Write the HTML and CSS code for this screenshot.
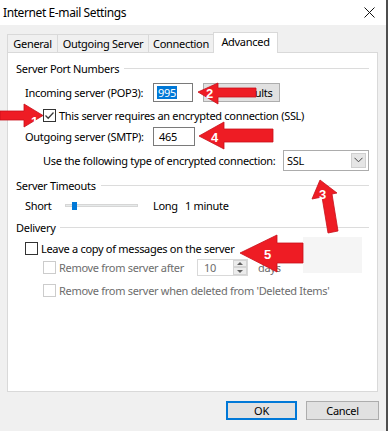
FILE: index.html
```html
<!DOCTYPE html>
<html lang="en">
<head>
    <meta charset="UTF-8">
    <title>Internet E-mail Settings</title>
    <link rel="stylesheet" href="styles.css">
</head>
<body>
    <div class="window">
        <!-- Title bar -->
        <div class="titlebar">
            <span class="title">Internet E-mail Settings</span>
            <svg class="close" width="11" height="11" viewBox="0 0 11 11">
                <path d="M0.5 0.5 L10.5 10.5 M10.5 0.5 L0.5 10.5" stroke="#111" stroke-width="1" fill="none"/>
            </svg>
        </div>

        <div class="dialog">
            <!-- Tabs -->
            <div class="tabs">
                <div class="tab tab-general">General</div>
                <div class="tab tab-outgoing">Outgoing Server</div>
                <div class="tab tab-connection">Connection</div>
                <div class="tab tab-advanced active">Advanced</div>
            </div>

            <!-- Advanced panel -->
            <div class="panel">
                <div class="group-title">Server Port Numbers</div>

                <div class="row row-incoming">
                    <span class="field-label">Incoming server (POP3):</span>
                    <div class="textbox tb-incoming"><span class="selected">995</span></div>
                    <div class="btn btn-defaults">Use Defaults</div>
                </div>

                <div class="row row-ssl indent">
                    <span class="checkbox checked">
                        <svg width="11" height="11" viewBox="0 0 11 11">
                            <path d="M1.5 5.5 L4.2 8.2 L9.5 2.5" stroke="#3c3c3c" stroke-width="1.3" fill="none"/>
                        </svg>
                    </span>
                    <span>This server requires an encrypted connection (SSL)</span>
                </div>

                <div class="row row-outgoing">
                    <span class="field-label">Outgoing server (SMTP):</span>
                    <div class="textbox tb-outgoing">465</div>
                </div>

                <div class="row row-encrypt indent">
                    <span class="encrypt-label">Use the following type of encrypted connection:</span>
                    <div class="select">
                        <span>SSL</span>
                        <span class="select-btn">
                            <svg width="9" height="6" viewBox="0 0 9 6">
                                <path d="M0.5 0.8 L4.5 4.8 L8.5 0.8" stroke="#444" stroke-width="1" fill="none"/>
                            </svg>
                        </span>
                    </div>
                </div>

                <div class="group-title gt-timeouts">Server Timeouts</div>

                <div class="row row-slider">
                    <span class="short-label">Short</span>
                    <div class="track"><span class="thumb"></span></div>
                    <span class="long-label">Long</span>
                    <span>1 minute</span>
                </div>

                <div class="group-title gt-delivery">Delivery</div>

                <div class="row row-leave">
                    <span class="checkbox"></span>
                    <span>Leave a copy of messages on the server</span>
                </div>

                <div class="row row-remove indent disabled">
                    <span class="checkbox"></span>
                    <span class="remove-label">Remove from server after</span>
                    <div class="spin">
                        <span class="spin-value">10</span>
                        <span class="spin-btns">
                            <span class="spin-up"></span>
                            <span class="spin-down"></span>
                        </span>
                    </div>
                    <span class="days">days</span>
                </div>

                <div class="row row-deleted indent disabled">
                    <span class="checkbox"></span>
                    <span>Remove from server when deleted from 'Deleted Items'</span>
                </div>
            </div>

            <!-- Buttons -->
            <div class="footer">
                <div class="btn btn-ok">OK</div>
                <div class="btn btn-cancel">Cancel</div>
            </div>
        </div>

        <!-- Annotation arrows drawn over the dialog -->
        <svg class="annotations" width="388" height="431" viewBox="0 0 388 431">
            <rect x="303" y="237" width="59" height="36" fill="#f5f5f5"/>
            <g fill="#ee1c24" stroke="#c8101a" stroke-width="0.8">
                <polygon points="0,111 24,111 24,104 43,115.5 24,127 24,120 0,120"/>
                <polygon points="198,92 218,83 218,88 256,88 256,97 218,97 218,104"/>
                <polygon points="199,136 224,122 224,129 273,129 273,142 224,142 224,149"/>
                <polygon points="320,180 337,193 332,194 338,231 328,233 322,197 312,199"/>
                <polygon points="240,253 277,235 277,243 303,243 303,263 277,263 277,272"/>
            </g>
            <g class="num" fill="#fff">
                <text x="31" y="126">1</text>
                <text x="206" y="98">2</text>
                <text x="319" y="199">3</text>
                <text x="211" y="142">4</text>
                <text x="264" y="259">5</text>
            </g>
        </svg>
    </div>
</body>
</html>
```

FILE: styles.css
```css
body {
    margin: 0;
    padding: 0;
    background-color: #f0f0f0;
    font-family: "Noto Sans", "Open Sans", sans-serif;
    font-size: 11px;
    letter-spacing: -0.3px;
    color: #000;
}

.window {
    position: relative;
    width: 386px;
    height: 431px;
    border-right: 2px solid #4e4e4e;
    background-color: #f0f0f0;
    overflow: hidden;
}

/* Title bar */
.titlebar {
    height: 25px;
    background-color: #fff;
    display: flex;
    align-items: center;
    justify-content: space-between;
    padding: 0 11px 0 3px;
}

.title {
    font-size: 12px;
    letter-spacing: -0.4px;
    margin-top: -1px;
}

.close {
    margin-top: -1px;
}

/* Tabs */
.dialog {
    padding-top: 7px;
}

.tabs {
    display: flex;
    align-items: flex-end;
    margin-left: 7px;
    height: 20px;
}

.tab {
    height: 17px;
    line-height: 17px;
    text-align: center;
    border: 1px solid #d9d9d9;
    border-bottom: none;
    background-color: #f0f0f0;
    margin-right: -1px;
}

.tab-general { width: 49px; }
.tab-outgoing { width: 90px; }
.tab-connection { width: 64px; }

.tab.active {
    width: 63px;
    height: 20px;
    line-height: 17px;
    background-color: #fff;
    position: relative;
    z-index: 2;
    margin-bottom: -1px;
}

/* Panel */
.panel {
    margin-left: 7px;
    width: 353px;
    height: 333px;
    background-color: #fff;
    border: 1px solid #d9d9d9;
    padding: 5px 8px 0 8px;
}

.group-title {
    display: flex;
    align-items: center;
    height: 20px;
}

.group-title::after {
    content: "";
    flex: 1;
    height: 1px;
    background-color: #dcdcdc;
    margin-left: 5px;
    margin-top: 1px;
}

.gt-timeouts { margin-top: 4px; }
.gt-delivery { margin-top: 2px; }

.row {
    display: flex;
    align-items: center;
    height: 20px;
    padding-left: 9px;
    white-space: nowrap;
}

.row.indent {
    padding-left: 27px;
}

.row.disabled {
    color: #6d6d6d;
}

.row-incoming { margin-top: 4px; }
.row-ssl { margin-top: 3px; }
.row-outgoing { margin-top: 1px; }
.row-encrypt { margin-top: 3px; height: 22px; }
.row-leave { margin-top: 1px; }
.row-remove { height: 18px; }
.row-deleted { margin-top: 4px; }

.field-label {
    width: 128px;
}

.textbox {
    border: 1px solid #7a7a7a;
    background-color: #fff;
    display: flex;
    align-items: center;
    padding-left: 3px;
    box-sizing: border-box;
    height: 19px;
}

.tb-incoming { width: 40px; }
.tb-outgoing { width: 42px; padding-left: 5px; }

.selected {
    background-color: #0078d7;
    color: #fff;
    padding: 0 1px;
    line-height: 13px;
}

.btn {
    box-sizing: border-box;
    background-color: #e1e1e1;
    border: 1px solid #adadad;
    display: flex;
    align-items: center;
    justify-content: center;
}

.btn-defaults {
    width: 77px;
    height: 19px;
    margin-left: 10px;
}

/* Checkboxes */
.checkbox {
    width: 13px;
    height: 13px;
    box-sizing: border-box;
    border: 1px solid #333;
    background-color: #fff;
    margin-right: 3px;
    display: flex;
    align-items: center;
    justify-content: center;
}

.disabled .checkbox {
    border-color: #cccccc;
}

/* Encryption dropdown */
.encrypt-label {
    width: 240px;
}

.select {
    box-sizing: border-box;
    width: 86px;
    height: 21px;
    border: 1px solid #acacac;
    display: flex;
    align-items: center;
    justify-content: space-between;
    padding: 0 2px 0 3px;
}

.select-btn {
    width: 15px;
    height: 15px;
    box-sizing: border-box;
    background-color: #e5e5e5;
    border: 1px solid #cfcfcf;
    display: flex;
    align-items: center;
    justify-content: center;
}

/* Timeout slider */
.short-label {
    width: 40px;
}

.track {
    position: relative;
    width: 73px;
    height: 3px;
    background-color: #e7eaea;
    border: 1px solid #d6d6d6;
    box-sizing: border-box;
    margin-right: 15px;
}

.thumb {
    position: absolute;
    left: 6px;
    top: -3px;
    width: 5px;
    height: 8px;
    background-color: #0078d7;
}

.long-label {
    width: 32px;
}

/* Spin box */
.remove-label {
    width: 138px;
}

.spin {
    box-sizing: border-box;
    width: 51px;
    height: 17px;
    border: 1px solid #d9d9d9;
    display: flex;
    align-items: center;
    justify-content: space-between;
    padding-left: 6px;
}

.spin-btns {
    width: 14px;
    height: 15px;
    display: flex;
    flex-direction: column;
}

.spin-up, .spin-down {
    flex: 1;
    background-color: #ececec;
    border: 1px solid #d4d4d4;
    position: relative;
}

.spin-up::after, .spin-down::after {
    content: "";
    position: absolute;
    left: 3px;
    border-left: 3px solid transparent;
    border-right: 3px solid transparent;
}

.spin-up::after {
    top: 1px;
    border-bottom: 3px solid #606060;
}

.spin-down::after {
    top: 2px;
    border-top: 3px solid #606060;
}

.days {
    margin-left: 10px;
}

/* Footer buttons */
.footer {
    display: flex;
    justify-content: flex-end;
    gap: 9px;
    padding-right: 7px;
    margin-top: 9px;
}

.btn-ok {
    width: 71px;
    height: 19px;
    border: 2px solid #0078d7;
}

.btn-cancel {
    width: 73px;
    height: 19px;
}

/* Annotations */
.annotations {
    position: absolute;
    top: 0;
    left: 0;
    pointer-events: none;
}

.num text {
    font-family: "Liberation Sans", Arial, sans-serif;
    font-weight: bold;
    font-size: 13px;
    letter-spacing: 0;
}
```
